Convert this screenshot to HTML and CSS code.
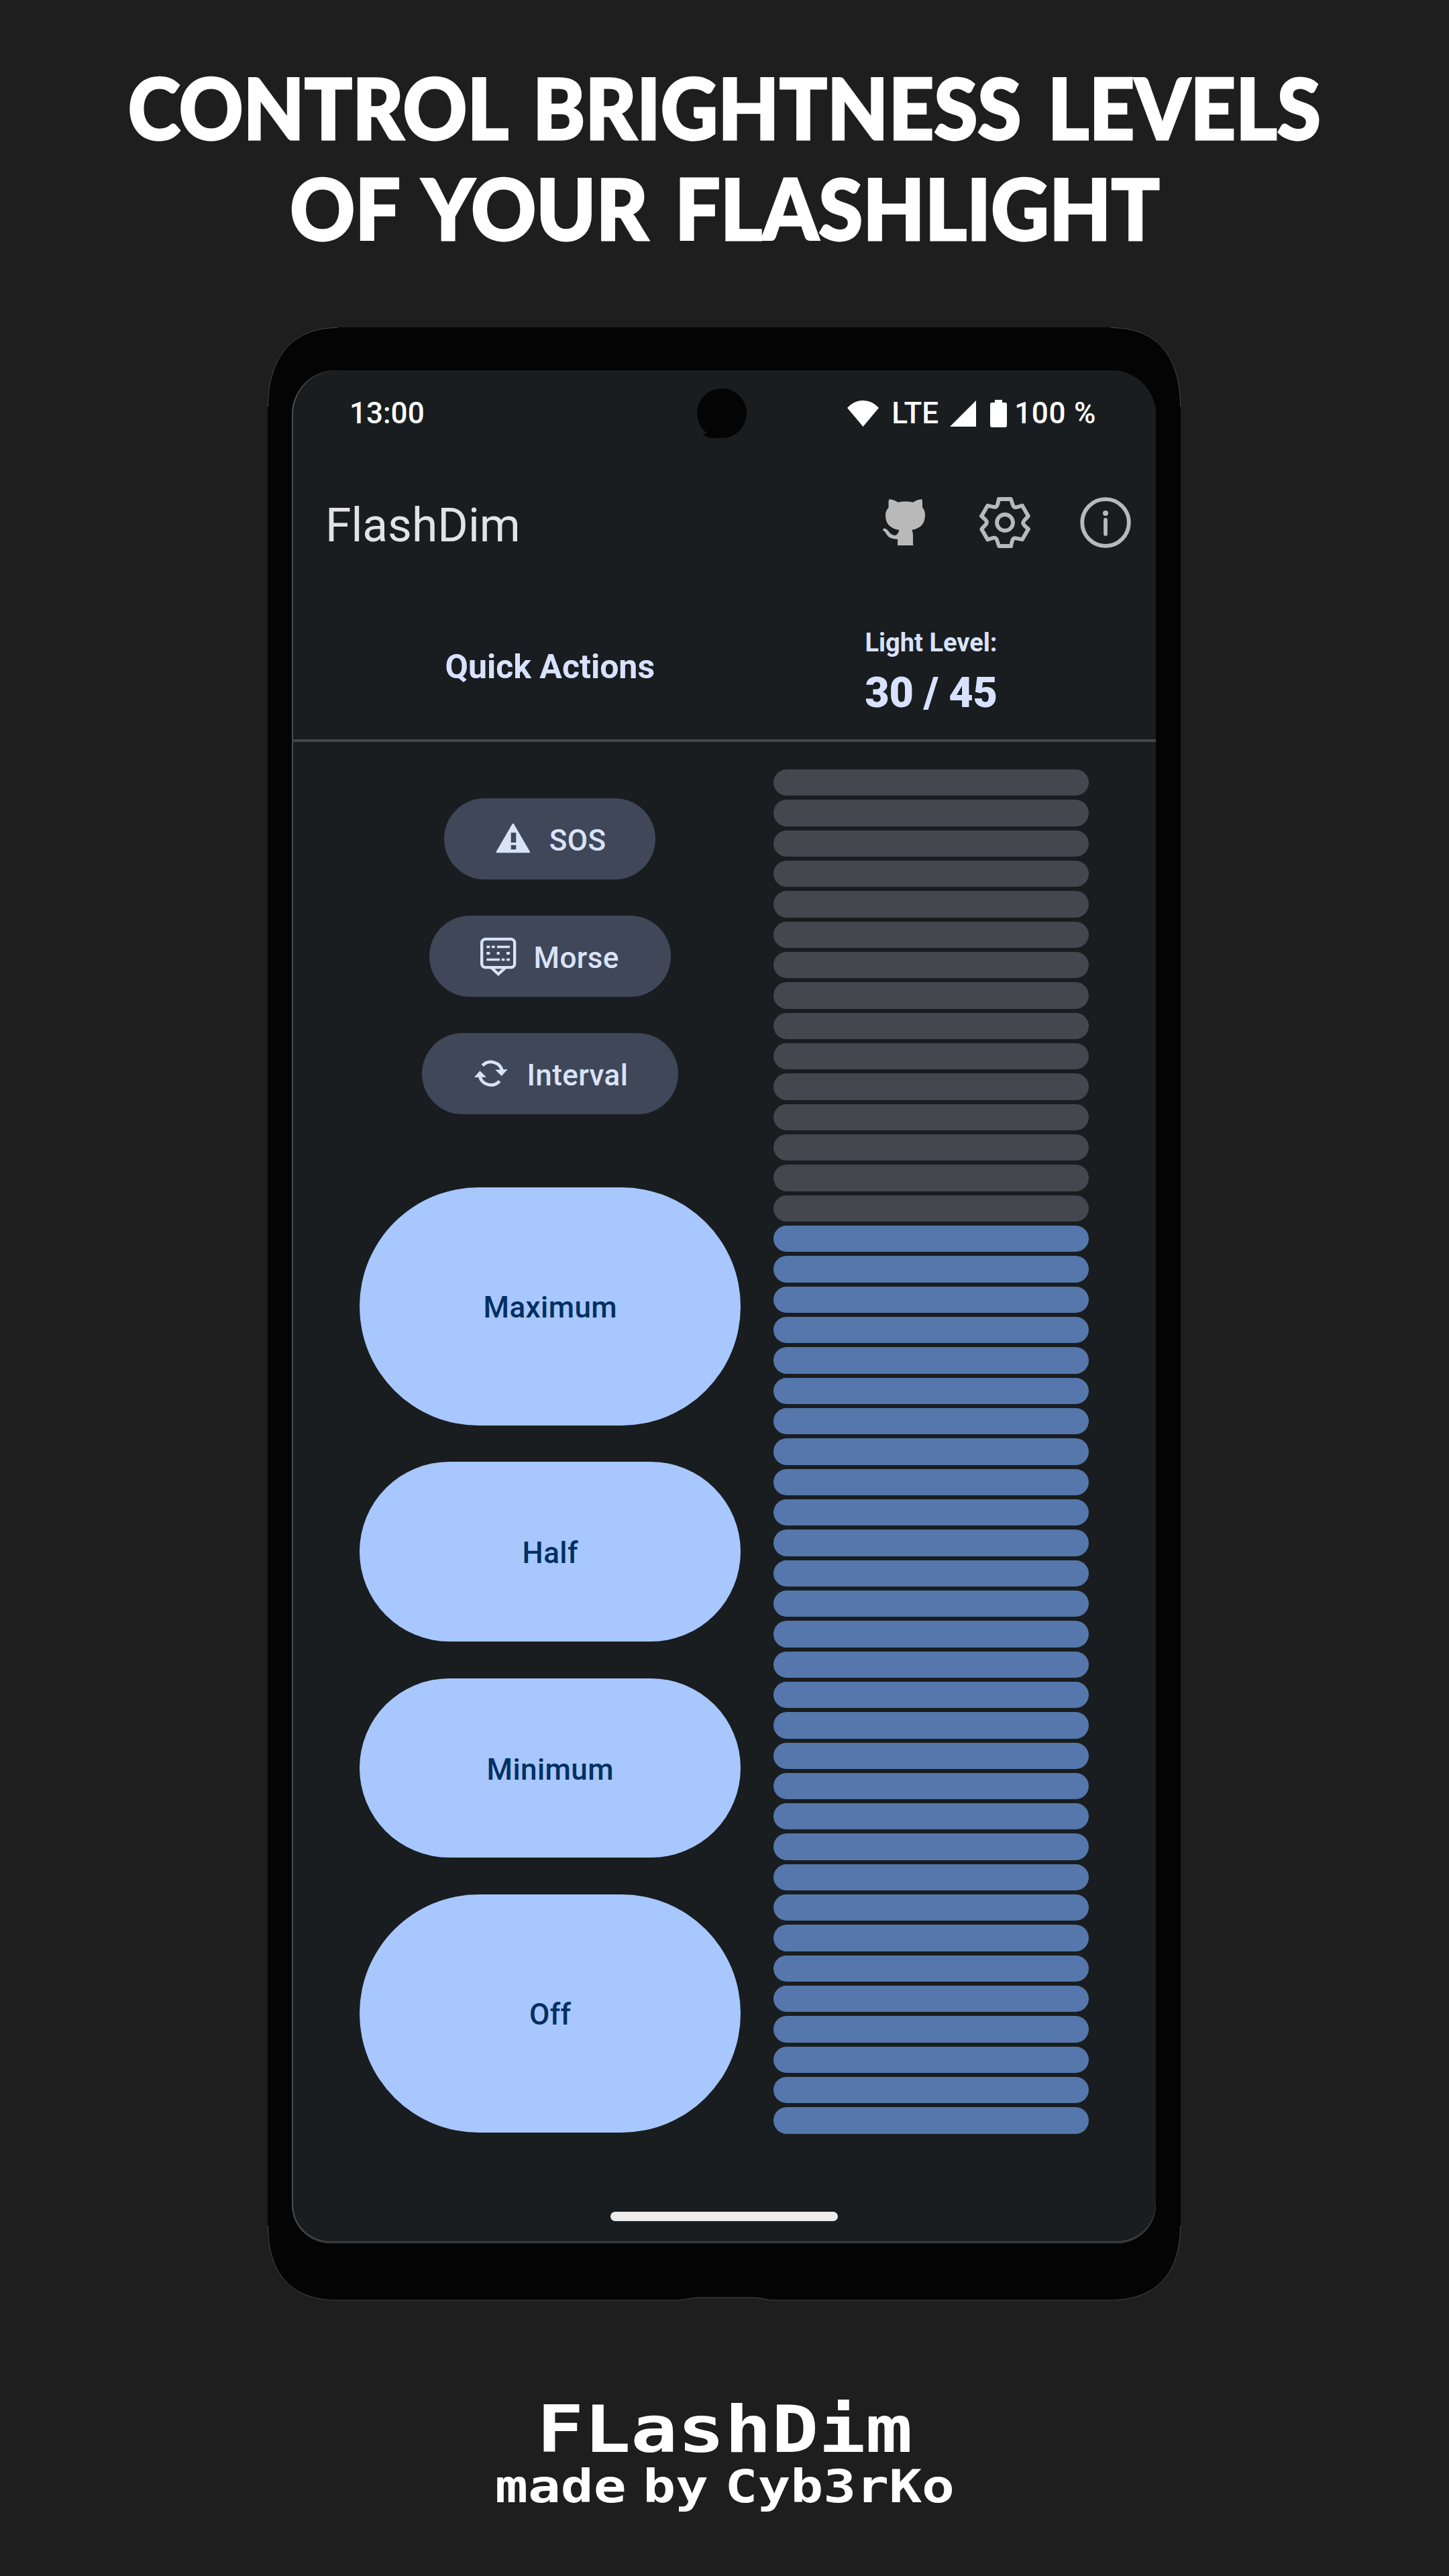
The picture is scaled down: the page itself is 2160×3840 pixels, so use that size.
FILE: index.html
```html
<!DOCTYPE html>
<html lang="en">
<head>
<meta charset="utf-8">
<title>FlashDim</title>
<link rel="stylesheet" href="styles.css">
</head>
<body>
<h1 class="headline"><span class="headline-top">CONTROL BRIGHTNESS LEVELS</span><span class="headline-bottom">OF YOUR FLASHLIGHT</span></h1>

<main class="phone">
  <svg class="frame" viewBox="0 0 1361 2942" aria-hidden="true">
    <path class="frame-body" d="M104 0H1257C1331 0 1361 48 1361 118V2830C1361 2900 1325 2941.500 1255 2941.500H757C742 2941.500 738 2937 722 2937H645C628 2937 622 2941.500 607 2941.500H104C34 2941.500 0 2900 0 2830V118C0 48 34 0 104 0Z"/>
    <path class="frame-edge" d="M.5 118C.5 48 34 .5 104 .5M1257 .5C1330 .5 1360.500 48 1360.500 118M1360.500 2830C1360.500 2900 1325 2941 1255 2941H757C742 2941 738 2937 722 2937H645C628 2937 622 2941 607 2941H104C34 2941 .5 2900 .5 2830"/>
  </svg>
  <div class="screen">
    <svg class="camera" viewBox="0 0 76 76" aria-hidden="true"><circle cx="38" cy="37" r="37"/><path d="M9 67h12l16 7H24Q14 73 9 67z"/></svg>
    <div class="statusbar">
      <span class="clock">13:00</span>
      <div class="indicators">
        <svg class="wifi" viewBox="0 0 47 39"><path d="M0 11Q10 0 23.500 0T47 11L23.500 39Z"/></svg>
        <span class="network">LTE</span>
        <svg class="signal" viewBox="0 0 39 39"><path d="M39 0V39H0Z"/></svg>
        <svg class="battery" viewBox="0 0 25 41"><path d="M7 0H18V4H22Q25 4 25 7V38Q25 41 22 41H3Q0 41 0 38V7Q0 4 3 4H7Z"/></svg>
        <span class="charge">100 %</span>
      </div>
    </div>
    <header class="appbar">
      <span class="title">FlashDim</span>
      <div class="tools">
        <svg class="github" viewBox="530 822 140 207" preserveAspectRatio="none"><path d="M549 830Q550 822 555 823Q568 825 580 836Q605 829 630 836Q642 825 655 823Q661 822 661 830V858Q670 873 670 893Q670 950 626 960Q630 970 630 985V1024L632 1029H579V1001Q555 1002 545 985Q538 968 530 960Q530 953 537 953Q545 956 551 970Q560 985 572 984Q581 980 584 960Q538 950 539 893Q539 873 549 860Z"/></svg>
        <svg class="tool" viewBox="-38 -38 76 76">
          <defs><path id="tooth" d="M-9-35H9L11.500-27Q13-21.500 18-23L25.800-25.300"/></defs>
          <use href="#tooth"/><use href="#tooth" transform="rotate(60)"/><use href="#tooth" transform="rotate(120)"/><use href="#tooth" transform="rotate(180)"/><use href="#tooth" transform="rotate(240)"/><use href="#tooth" transform="rotate(300)"/>
          <circle r="12"/>
        </svg>
        <svg class="tool" viewBox="-38 -38 76 76"><circle r="34.800"/><path d="M0-4V17"/><circle class="dot" cy="-14" r="4"/></svg>
      </div>
    </header>
    <section class="summary">
      <h2 class="quick">Quick Actions</h2>
      <div class="level"><span class="level-label">Light Level:</span><strong class="level-value">30 / 45</strong></div>
    </section>
    <section class="controls">
      <div class="actions">
        <button class="chip sos"><svg viewBox="412 158 165 165"><path fill-rule="evenodd" stroke="currentColor" stroke-width="8" stroke-linejoin="round" d="M495.500 176L567 299H424Z"/><path class="cut" d="M486 213h23v44h-23zM486 268h23v20h-23z"/></svg><span>SOS</span></button>
        <button class="chip morse"><svg viewBox="345 683 165 165"><g fill="none" stroke="currentColor" stroke-width="13"><rect x="354.500" y="688.500" width="147" height="127" rx="17"/><path d="M398 817L428.500 845L460 817"/></g><path d="M376 718h15v11h-15zM399 718h14v11h-14zM423 718h57v11h-57zM376 746h15v12h-15zM422 746h12v12h-12zM465 746h15v12h-15zM376 775h59v11h-59zM443 775h14v11h-14zM465 775h15v11h-15z"/></svg><span>Morse</span></button>
        <button class="chip interval"><svg viewBox="312 1210 165 165"><g fill="none" stroke="currentColor" stroke-width="14"><path d="M358 1256A52 52 0 0 1 446 1280"/><path d="M434 1326A52 52 0 0 1 345 1303"/></g><path d="M415 1275L470 1273L443 1303ZM321 1309L346 1280L375 1308Z"/></svg><span>Interval</span></button>
        <div class="presets">
          <button class="preset tall">Maximum</button>
          <button class="preset">Half</button>
          <button class="preset">Minimum</button>
          <button class="preset tall">Off</button>
        </div>
      </div>
      <div class="meter">
        <i></i><i></i><i></i><i></i><i></i><i></i><i></i><i></i><i></i><i></i><i></i><i></i><i></i><i></i><i></i>
        <i class="on"></i><i class="on"></i><i class="on"></i><i class="on"></i><i class="on"></i><i class="on"></i><i class="on"></i><i class="on"></i><i class="on"></i><i class="on"></i>
        <i class="on"></i><i class="on"></i><i class="on"></i><i class="on"></i><i class="on"></i><i class="on"></i><i class="on"></i><i class="on"></i><i class="on"></i><i class="on"></i>
        <i class="on"></i><i class="on"></i><i class="on"></i><i class="on"></i><i class="on"></i><i class="on"></i><i class="on"></i><i class="on"></i><i class="on"></i><i class="on"></i>
      </div>
    </section>
    <div class="navbar"></div>
  </div>
</main>

<footer class="credits">
  <span class="brand">FLashDim</span>
  <span class="author">made by Cyb3rKo</span>
</footer>
</body>
</html>
```
FILE: styles.css
```css
* { box-sizing: border-box; }

body {
  margin: 0;
  width: 2160px;
  height: 3840px;
  overflow: hidden;
  background: #1e1e1e;
  color: #fff;
  font-family: Roboto, "Liberation Sans", sans-serif;
  display: flex;
  flex-direction: column;
  align-items: center;
}

svg { display: block; flex: none; fill: currentColor; }

/* Headline */
.headline {
  margin: 0;
  padding-top: 85px;
  height: 488px;
  display: flex;
  flex-direction: column;
  align-items: center;
  font: 900 125px/150px Lato, sans-serif;
  white-space: nowrap;
  -webkit-text-stroke: 3px #fff;
}
.headline-top { word-spacing: 12px; transform: scaleX(.945); }
.headline-bottom { word-spacing: 12px; transform: scaleX(.957); }

/* Phone */
.phone {
  position: relative;
  width: 1361px;
  height: 2942px;
  margin-left: -1px;
  padding: 64px 37px 0 36px;
}
.frame { position: absolute; inset: 0; width: 100%; height: 100%; }
.frame-body { fill: #040404; }
.frame-edge { fill: none; stroke: #4c4c4c; stroke-width: 1; }
.screen {
  position: relative;
  height: 2792px;
  background: #191d1f;
  border-radius: 66px 66px 58px 58px;
  box-shadow: inset 2px 0 #4a4b4c, inset 0 -1px #505051, inset 0 -2px #191a1b, inset 0 -3px #505051;
  display: flex;
  flex-direction: column;
}
.camera { position: absolute; left: 603px; top: 27px; width: 76px; height: 76px; color: #040404; }

.statusbar {
  height: 128px;
  padding: 0 89px 0 86px;
  display: flex;
  align-items: center;
  justify-content: space-between;
  font-size: 44px;
  font-weight: 500;
  line-height: 52px;
}
.indicators { display: flex; align-items: center; }
.wifi { width: 47px; height: 39px; }
.network { width: 72px; margin-left: 19px; }
.signal { width: 39px; height: 39px; margin-left: 15px; }
.battery { width: 25px; height: 41px; margin-left: 21px; }
.charge { margin-left: 11px; letter-spacing: .7px; }

.appbar {
  height: 197px;
  padding: 0 37px 0 50px;
  display: flex;
  align-items: center;
  justify-content: space-between;
  color: #b9b9b9;
}
.title { padding-top: 11px; color: #e3e2e4; font-size: 69.5px; line-height: 80px; }
.tools { display: flex; align-items: center; }
.github { width: 63px; height: 69px; margin-right: 81px; }
.tool { width: 76px; height: 76px; overflow: visible; fill: none; stroke: currentColor; stroke-width: 5.8px; stroke-linecap: round; stroke-linejoin: round; }
.tool + .tool { margin-left: 74px; }
.dot { fill: currentColor; stroke: none; }

.summary {
  height: 229px;
  padding: 55px 100px 0 100.5px;
  border-bottom: 4px solid #44474b;
  display: grid;
  grid-template-columns: 568.5px 470px;
  column-gap: 49px;
  text-align: center;
  color: #d8e2ff;
  font-weight: 700;
}
.quick { margin: 32px 0 0; font-size: 50px; line-height: 60px; }
.level { display: flex; flex-direction: column; }
.level-label { font-size: 38px; line-height: 52px; }
.level-value { font-size: 63px; line-height: 98px; letter-spacing: -.3px; }

.controls {
  height: 2074.5px;
  padding: 41px 100px 0 100.5px;
  display: grid;
  grid-template-columns: 568.5px 470px;
  column-gap: 49px;
}
.actions { padding-top: 43px; display: flex; flex-direction: column; align-items: center; }
button { border: 0; margin: 0; font: 500 44px/52px Roboto, sans-serif; letter-spacing: .4px; }
.chip {
  height: 121px;
  margin-bottom: 54.2px;
  padding: 0 0 0 75px;
  border-radius: 61px;
  background: #3f4759;
  color: #d9e3f8;
  display: flex;
  align-items: center;
  gap: 26.5px;
}
.chip svg { width: 55px; height: 55px; overflow: visible; }
.chip span { padding-top: 4px; }
.cut { fill: #3f4759; }
.sos { width: 315px; }
.morse { width: 359.5px; gap: 25.5px; }
.interval { width: 381.5px; }

.presets { width: 100%; margin-top: 54.5px; display: flex; flex-direction: column; gap: 54.7px; }
.preset { height: 267.7px; padding: 4px 0 0 1px; border-radius: 178px; background: #a8c7ff; color: #003062; }
.tall { height: 354.6px; }

.meter { height: 2033.8px; display: flex; flex-direction: column; gap: 6px; }
.meter i { flex: 1; border-radius: 20px; background: #44474e; }
.meter .on { background: #5577ab; }

.navbar { width: 339px; height: 14px; margin: 116px auto 0; border-radius: 7px; background: #ececec; }

/* Footer */
.credits {
  padding-top: 142px;
  display: flex;
  flex-direction: column;
  align-items: center;
  font-family: "DejaVu Sans Mono", monospace;
  font-weight: 700;
  white-space: pre;
}
.brand { font-size: 96px; line-height: 100px; transform: scaleX(1.211); }
.author { font-size: 67.5px; line-height: 70px; word-spacing: -20.3px; transform: scaleX(1.204); }
```
